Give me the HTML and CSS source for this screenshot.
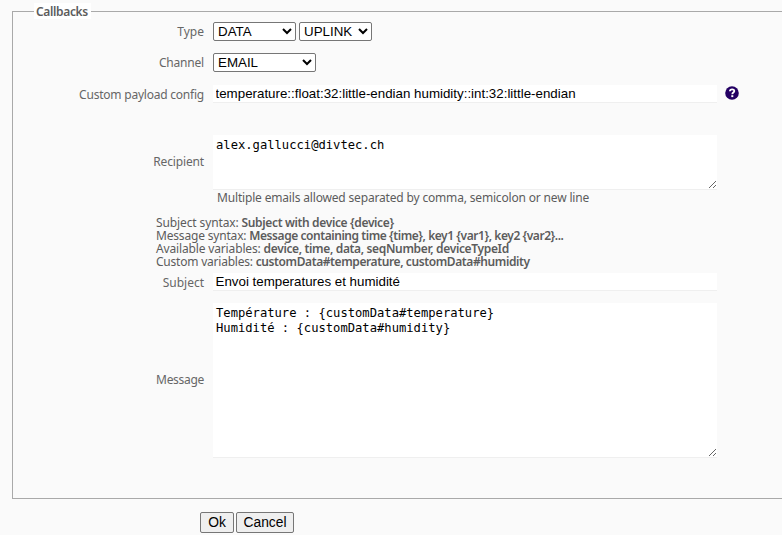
FILE: index.html
```html
<!DOCTYPE html>
<html lang="en">
<head>
<meta charset="utf-8">
<title>Callbacks</title>
<link rel="stylesheet" href="styles.css">
</head>
<body>
<form>
<fieldset class="panel">
<legend class="legend">Callbacks</legend>
<div class="row row-type"><label class="label l-type">Type</label><div class="controls"><select class="select s-data"><option>DATA</option></select><select class="select s-uplink"><option>UPLINK</option></select></div></div>
<div class="row row-channel"><label class="label l-channel">Channel</label><div class="controls"><select class="select s-email"><option>EMAIL</option></select></div></div>
<div class="row row-config"><label class="label l-config">Custom payload config</label><input class="field" type="text" value="temperature::float:32:little-endian humidity::int:32:little-endian" spellcheck="false">
<svg class="help" viewBox="0 0 14 14" width="14" height="14"><circle cx="7" cy="7" r="6.8" fill="#240063"/><path d="M4.9 5.3C5 3.9 5.9 3.3 7.1 3.3c1.3 0 2.2.7 2.2 1.8C9.3 6.6 7.3 6.5 7.3 8.2" fill="none" stroke="#fff" stroke-width="1.8"/><rect x="6.3" y="9.2" width="2" height="1.9" fill="#fff"/></svg></div>
<div class="row row-recipient"><label class="label l-recipient">Recipient</label><textarea class="field area" spellcheck="false">alex.gallucci@divtec.ch</textarea></div>
<div class="note"><span>Multiple emails allowed separated by comma, semicolon or new line</span></div>
<div class="syntax">
<div><span class="k1">Subject syntax: </span><b class="b1">Subject with device {device}</b></div>
<div><span class="k2">Message syntax: </span><b class="b2">Message containing time {time}, key1 {var1}, key2 {var2}...</b></div>
<div><span class="k3">Available variables: </span><b class="b3">device, time, data, seqNumber, deviceTypeId</b></div>
<div><span class="k4">Custom variables: </span><b class="b4">customData#temperature, customData#humidity</b></div>
</div>
<div class="row row-subject"><label class="label l-subject">Subject</label><input class="field" type="text" value="Envoi temperatures et humidité" spellcheck="false"></div>
<div class="row row-message"><label class="label l-message">Message</label><textarea class="field area" spellcheck="false">Température : {customData#temperature}
Humidité : {customData#humidity}</textarea></div>
</fieldset>
<div class="actions"><button type="button" class="btn ok">Ok</button><button type="button" class="btn cancel">Cancel</button></div>
</form>
</body>
</html>
```
FILE: styles.css
```css
* { box-sizing: border-box; }
html { overflow: hidden; }
body { margin: 0; background: #fafafa; color: #5c5c5c; font: 12px/13px "Noto Sans", sans-serif; overflow: hidden; }
.panel { margin: 3px -10px 0 12px; padding: 0; border: 1px solid #a9a9a9; height: 496px; min-width: 0; }
.legend { margin-left: 21px; width: 57px; height: 16px; padding: 0 2px; line-height: 18px; font-weight: 600; background: #fff; white-space: nowrap; letter-spacing: -0.35px; }
.row { display: flex; align-items: center; }
.label { width: 191px; margin-right: 9px; text-align: right; color: #666; white-space: nowrap; }
.l-config { letter-spacing: -0.22px; }
.l-channel { letter-spacing: -0.2px; }
.l-recipient, .l-message { padding-bottom: 3px; letter-spacing: -0.15px; }
.l-message { letter-spacing: -0.3px; padding-bottom: 2px; }
.controls { display: flex; gap: 3px; }
.row-type { margin-top: 3px; height: 19px; }
.row-channel { margin-top: 12px; height: 19px; }
.row-config { margin-top: 13px; height: 18px; }
.row-recipient { margin-top: 32px; height: 55px; }
.row-subject { margin-top: 5px; height: 18px; }
.row-message { margin-top: 12px; height: 155px; }
.select { height: 19px; margin: 0; padding: 0; border: 1px solid #767676; border-radius: 2px; background-color: #fff; color: #000; font: 13.333px "Liberation Sans", sans-serif; }
.s-data { width: 83px; }
.s-uplink { width: 73px; }
.s-email { width: 103px; }
.field { width: 504px; height: 100%; margin: 0; padding: 0 2.5px; border: 0 solid #efefef; border-bottom-width: 1px; background: #fff; color: #000; font: 13.333px "Liberation Sans", sans-serif; outline: 0; }
.area { padding: 3px; font: 12.17px/15px "DejaVu Sans Mono", monospace; resize: both; }
.help { margin-left: 8px; position: relative; top: -1px; }
.note { margin: 1px 0 0 204px; height: 13px; white-space: nowrap; letter-spacing: -0.17px; }
.syntax { margin: 12px 0 0 143px; white-space: nowrap; }
.syntax > div { height: 13px; }
.syntax b { font-weight: 600; }
.k1 { letter-spacing: -0.12px; }
.k2 { letter-spacing: -0.18px; }
.k3 { letter-spacing: -0.15px; }
.k4 { letter-spacing: -0.22px; }
.b1 { letter-spacing: -0.36px; }
.b2 { letter-spacing: -0.44px; }
.b3 { letter-spacing: -0.35px; }
.b4 { letter-spacing: -0.4px; }
.actions { display: flex; gap: 2px; margin: 13px 0 0 200px; }
.btn { height: 21px; padding: 0; border: 1px solid #767676; border-radius: 2px; background: #efefef; color: #000; font: 13.8px "Liberation Sans", sans-serif; }
.ok { width: 34px; }
.cancel { width: 58px; }
```
